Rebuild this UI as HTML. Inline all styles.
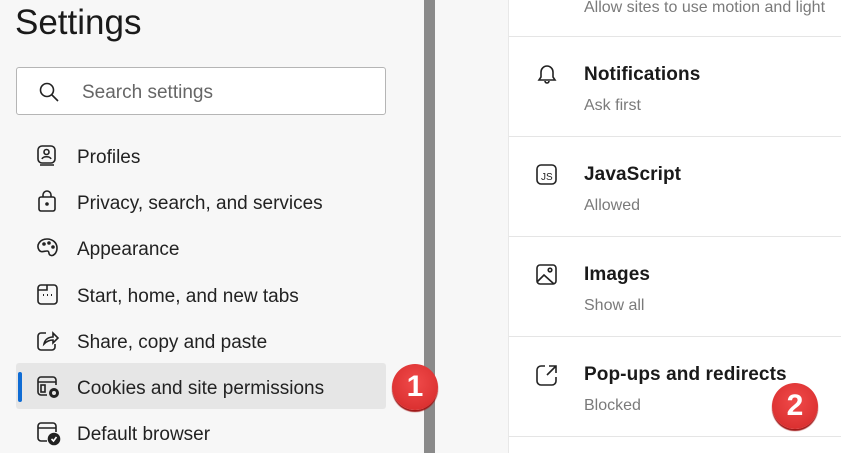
<!DOCTYPE html><html><head><style>
body{margin:0;width:841px;height:453px;overflow:hidden;background:#f7f7f7;font-family:"Liberation Sans",sans-serif;position:relative}
.a{position:absolute}
.t{font-size:35px;color:#1a1a1a;left:15px;top:3px}
.s{left:16px;top:67px;width:368px;height:46px;border:1px solid #b5b5b5;background:#fff;border-radius:3px}
.n{left:77px;font-size:19px;color:#222}
.bar{left:424px;top:0;width:11px;height:453px;background:#8a8a8a}
.card{left:508px;top:0;width:340px;height:453px;background:#fff;border-left:1px solid #e8e8e8}
.hr{left:509px;width:332px;height:1px;background:#e5e5e5}
.h{left:584px;font-size:19px;color:#1a1a1a;font-weight:bold;letter-spacing:0.1px}
.sub{left:584px;font-size:16px;color:#7a7a7a}
.b{width:46px;height:46px;border-radius:50%;background:radial-gradient(circle at 50% 40%,#f04a4a,#d42828);color:#fff;font-weight:bold;font-size:30px;text-align:center;line-height:46px;box-shadow:0 2px 1px #a01818}
svg{position:absolute;fill:none;stroke:#222;stroke-width:1.6}
</style></head><body>
<div class="a t">Settings</div>
<div class="a s"></div>
<svg style="left:38px;top:81px" width="22" height="22"><circle cx="9" cy="9" r="6.5"/><path d="M14 14l6 6"/></svg>
<div class="a" style="left:82px;top:82px;font-size:19px;color:#666">Search settings</div>
<div class="a" style="left:16px;top:363px;width:370px;height:46px;background:#e6e6e6;border-radius:3px"></div>
<div class="a" style="left:18px;top:372px;width:4px;height:30px;background:#0f6cd4;border-radius:2px"></div>
<svg style="left:36px;top:144px" width="24" height="24"><rect x="2" y="2" width="17" height="17" rx="4"/><circle cx="10.5" cy="8" r="2.5"/><path d="M6 15c1-3 8-3 9 0M4 21h14"/></svg>
<div class="a n" style="top:147px">Profiles</div>
<svg style="left:36px;top:190px" width="24" height="24"><rect x="3" y="7" width="16" height="14" rx="2"/><path d="M7 7V5a4 4 0 0 1 8 0v2"/><circle cx="11" cy="14" r="1" fill="#222"/></svg>
<div class="a n" style="top:193px">Privacy, search, and services</div>
<svg style="left:35px;top:236px" width="26" height="26"><path d="M12 3c6 0 10 4 10 9s-4 9-7 7c-2-1 0-4-3-4-3 0-6 2-8-1-3-5 1-11 8-11z"/><circle cx="9" cy="8" r="1" fill="#222"/><circle cx="14" cy="7" r="1" fill="#222"/><circle cx="18" cy="11" r="1" fill="#222"/></svg>
<div class="a n" style="top:239px">Appearance</div>
<svg style="left:36px;top:283px" width="24" height="24"><rect x="2" y="2" width="19" height="19" rx="3"/><path d="M2 7h9V2"/><path d="M7 12h1M11 12h1M15 12h1" stroke-width="2"/></svg>
<div class="a n" style="top:286px">Start, home, and new tabs</div>
<svg style="left:36px;top:329px" width="24" height="24"><path d="M10 4H5a3 3 0 0 0-3 3v11a3 3 0 0 0 3 3h11a3 3 0 0 0 3-3v-3"/><path d="M8 15c1-5 5-7 9-7V4l5 5-5 5v-3c-3 0-6 1-9 4z"/></svg>
<div class="a n" style="top:332px">Share, copy and paste</div>
<svg style="left:36px;top:375px" width="26" height="26"><path d="M11 20H5a3 3 0 0 1-3-3V5a3 3 0 0 1 3-3h12a3 3 0 0 1 3 3v5M2 7h18"/><rect x="5" y="10" width="4" height="7"/><circle cx="18" cy="18" r="3.5" stroke-width="3"/></svg>
<div class="a n" style="top:378px">Cookies and site permissions</div>
<svg style="left:36px;top:421px" width="26" height="26"><path d="M11 20H5a3 3 0 0 1-3-3V5a3 3 0 0 1 3-3h12a3 3 0 0 1 3 3v6M2 7h18"/><circle cx="18" cy="18" r="5.5" fill="#222"/><path d="M15.5 18l2 2 3-4" stroke="#fff"/></svg>
<div class="a n" style="top:424px">Default browser</div>
<div class="a bar"></div>
<div class="a card"></div>
<div class="a" style="left:584px;top:-1px;font-size:16px;color:#7a7a7a;white-space:nowrap">Allow sites to use motion and light</div>
<div class="a hr" style="top:36px"></div><div class="a hr" style="top:136px"></div><div class="a hr" style="top:236px"></div><div class="a hr" style="top:336px"></div><div class="a hr" style="top:436px"></div>
<svg style="left:535px;top:63px" width="24" height="24"><path d="M4 17h16l-2-3v-5a6 6 0 0 0-12 0v5z"/><path d="M10 18a2 2 0 0 0 4 0"/></svg>
<div class="a h" style="top:64px">Notifications</div><div class="a sub" style="top:97px">Ask first</div>
<svg style="left:535px;top:163px" width="24" height="24"><rect x="2" y="2" width="19" height="19" rx="4"/><text x="6" y="17" font-size="10" fill="#222" stroke="none" font-family="Liberation Sans">JS</text></svg>
<div class="a h" style="top:164px">JavaScript</div><div class="a sub" style="top:197px">Allowed</div>
<svg style="left:535px;top:263px" width="24" height="24"><rect x="2" y="2" width="19" height="19" rx="3"/><path d="M2 19l7-7 10 9"/><circle cx="15" cy="7" r="1.8"/></svg>
<div class="a h" style="top:264px">Images</div><div class="a sub" style="top:297px">Show all</div>
<svg style="left:535px;top:363px" width="24" height="24"><path d="M10 3H6a4 4 0 0 0-4 4v11a4 4 0 0 0 4 4h11a4 4 0 0 0 4-4v-4"/><path d="M12 12l9-9M14 3h7v7"/></svg>
<div class="a h" style="top:364px">Pop-ups and redirects</div><div class="a sub" style="top:397px">Blocked</div>
<div class="a b" style="left:392px;top:364px">1</div>
<div class="a b" style="left:772px;top:383px">2</div>
</body></html>
